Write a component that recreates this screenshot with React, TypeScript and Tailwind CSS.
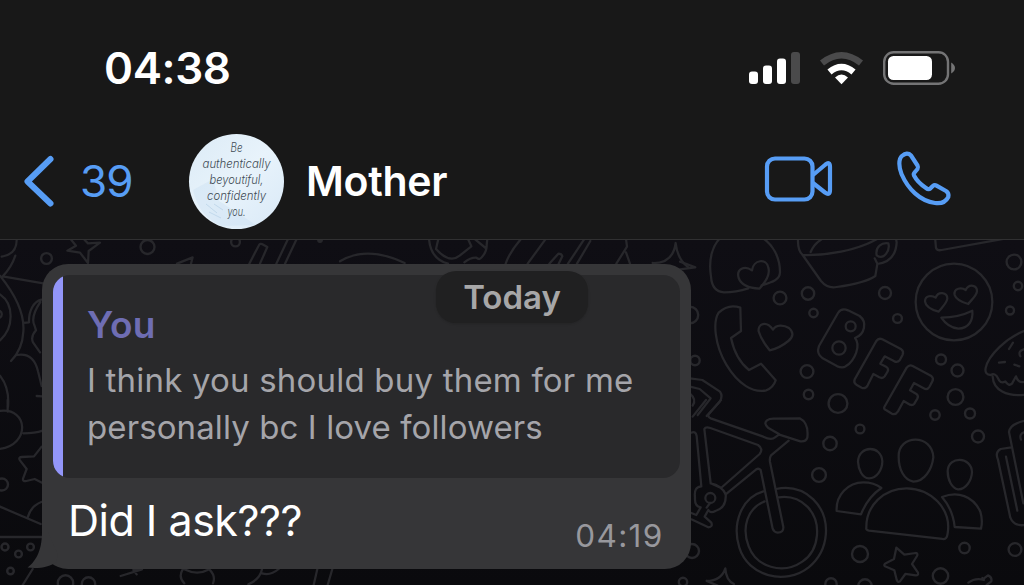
import type { ReactNode } from 'react';

const AVATAR_LINES = [
  { text: 'Be', y: 18, width: 12 },
  { text: 'authentically', y: 34, width: 68 },
  { text: 'beyoutiful,', y: 50, width: 54 },
  { text: 'confidently', y: 66, width: 59 },
  { text: 'you.', y: 82, width: 18 },
];

// x, y, radius
const BUBBLES: [number, number, number][] = [
  [780, 298, 6.7], [808, 293.5, 6.5], [813.5, 313, 4.5], [885, 293, 6.3], [897.5, 318.5, 4.7],
  [807, 371.5, 6.7], [808.5, 394.5, 5], [838, 403.5, 9.7], [941, 359.5, 5.3], [957.5, 370.5, 6.3],
  [955.5, 397, 8.2], [1014, 262, 7.7], [1018, 286, 4.5], [1010, 310.5, 4.3], [970, 413.5, 5.3],
  [935, 415, 5], [860, 429, 4.7], [830, 443.5, 7], [819, 475, 7.2], [978, 436.5, 6.3],
  [860, 554, 8.3], [964.5, 548, 5.5], [1015, 549.5, 6.7], [940.5, 576, 8], [692, 551, 7.3],
  [683, 582, 4.5], [831, 584, 6], [865, 586, 7], [690, 315, 8.5], [695, 360.5, 5],
  [46.5, 258.5, 5.7], [147.5, 247, 7.3], [235.5, 242, 4.7], [320, 240, 2],
  [2, 484.5, 6.3], [5, 547, 3.8], [18.5, 554, 3.7], [30.5, 547, 3.7], [10.5, 571, 3.6],
  [65.5, 583, 8], [88.5, 584, 7],
];

const Crop = ({ x, y, children }: { x: number; y: number; children: ReactNode }) => (
  <g transform={`translate(${x} ${y}) scale(.33333)`}>{children}</g>
);

const Wallpaper = () => (
  <svg
    viewBox="0 240 1024 345"
    className="col-start-1 row-start-1 h-[345px] w-[1024px]"
    fill="none"
    stroke="#27272b"
    strokeWidth="6.8"
    strokeLinecap="round"
    strokeLinejoin="round"
    aria-hidden="true"
  >
    <g strokeWidth="2.4">
      {BUBBLES.map(([cx, cy, r]) => (
        <circle key={`${cx}-${cy}`} cx={cx} cy={cy} r={r - 0.3} />
      ))}
    </g>
    <Crop x={680} y={235}>
      {/* speech bubble with heart */}
      <path d="M125 5C96 30 85 75 93 125Q96 170 132 172Q168 172 205 160M245 151C279 141 300 134 300 111C300 70 280 25 240 5" />
      <path d="M176 129C168 101 194 91 216 106C220 74 260 68 265 98C272 121 253 145 238 161C218 160 186 156 176 129Z" />
      {/* cup */}
      <path d="M355 0Q350 44 368 60L423 138Q442 161 470 156Q555 144 586 123L592 87Q647 80 650 22L646 0M368 60C438 62 530 48 595 10M392 51Q404 20 445 2" />
      <path d="M592 86L584 70M590 61C585 35 606 22 625 25C631 45 612 77 590 61Z" />
      <path d="M765 5L768 39Q772 48 785 45L980 10" />
      {/* heart eyes */}
      <circle cx="822" cy="201" r="115" />
      <path d="M735 199C735 181 756 180 767 188C774 168 802 171 802 191C799 207 784 219 776 230C758 225 737 218 735 199Z" />
      <path d="M824 180C820 158 845 157 857 165C868 144 892 151 891 169C889 184 872 196 865 207C848 202 828 195 824 180Z" />
      <path d="M784 248Q836 247 877 227C880 257 866 280 835 281Q804 278 784 248Z" />
      {/* telephone */}
      <path d="M181 218Q145 205 116 233C98 260 104 330 139 389C175 449 220 475 259 466Q280 457 287 436L243 386L207 405Q167 374 153 309L183 288Z" />
      <path d="M236 289C233 266 259 256 279 284C288 268 311 269 327 279C341 291 341 305 325 318Q300 339 269 346Q245 317 236 289Z" />
      {/* BFF letters */}
      <path d="M417 333L474 234Q484 218 504 226L539 243C561 260 556 298 525 309C543 330 526 376 497 394Q488 400 472 394L428 370Q408 356 417 333Z" />
      <circle cx="512" cy="274" r="15" /><circle cx="477" cy="339" r="20" />
      <path d="M524 433L589 318Q596 308 607 313L664 343Q672 349 668 359L659 376Q653 383 643 379L614 364L601 386L618 395Q628 402 622 411L614 424Q608 432 598 427L580 417L563 451Q556 463 545 458L529 449Q520 443 524 433Z" />
      <path d="M613 516L680 398Q688 388 698 393L754 423Q762 430 757 439L748 456Q742 466 731 460L702 444L690 466L708 476Q717 482 712 491L703 506Q698 512 690 509L671 498L654 529Q646 541 636 536L619 526Q610 522 613 516Z" />
      {/* donut */}
      <path d="M1035 287C980 308 925 360 917 399Q913 419 933 420Q940 414 950 423L958 437Q965 446 976 439Q986 455 996 446L1008 424Q1015 446 1035 440M938 425C940 465 980 486 1035 479M1035 342Q1012 347 1021 364M987 342L999 323M957 383L975 381M1003 389L1018 394" />
      <path d="M0 80L46 97L0 103M30 430L67 435L120 470Q130 484 119 500L80 543M30 455L59 462L92 490L53 540M30 476Q51 494 38 512" />
    </Crop>
    <Crop x={680} y={400}>
      {/* bicycle */}
      <path d="M38 50L78 0M123 0L86 43Q82 50 92 55L250 110Q274 122 285 112L298 103L264 83Q250 70 261 61Q268 56 280 56L359 55Q387 69 382 113Q378 126 361 124L298 104M326 122L273 166Q268 174 270 186L310 381Q311 398 293 398Q282 397 278 386L242 210Q235 202 225 211L137 283" />
      <path d="M73 87Q77 79 91 84L234 135Q251 147 239 162L123 264L92 250ZM34 98Q47 92 50 108L64 259M64 259Q41 260 45 292Q43 319 62 322L49 345L34 339M92 250Q125 256 137 283Q140 323 106 333Q92 341 85 330L74 350L94 368Q99 381 85 382L34 358M90 309L80 323" />
      <circle cx="91" cy="294" r="15" />
      <path d="M250 274C185 292 155 370 178 443C204 528 315 558 386 502C449 450 456 354 400 298C365 265 322 260 288 267M254 304C202 325 184 382 206 439C229 500 307 526 367 485C420 449 426 365 382 320Q347 285 296 292" />
      {/* people */}
      <path d="M534 185C536 135 604 134 607 184C607 208 591 235 567 235C546 234 535 208 534 185ZM656 170C654 102 758 101 760 172C756 208 733 245 700 245C671 239 656 207 656 170ZM803 213C806 167 874 169 876 216C875 242 857 269 834 268C816 265 803 241 803 213Z" />
      <path d="M559 383C558 316 612 265 680 265C752 266 815 325 803 400Q801 419 787 417L567 392Q557 390 559 383ZM543 343L470 333C467 286 504 247 550 247Q582 247 604 264Q563 292 543 343ZM786 291C833 273 879 287 901 335Q909 362 903 386L824 381Q819 329 786 291Z" />
      <path d="M649 443L673 464L707 459Q715 460 711 468L696 492L714 518Q716 526 707 526L676 522L660 544Q653 549 650 539L643 511L615 499Q609 494 619 489L642 477Z" />
      <path d="M80 543Q124 542 136 505Q138 541 162 552M80 543L113 557M865 548Q886 532 912 540L907 534M912 535L924 526Q937 531 934 544L920 555" />
      <path d="M1035 62Q990 72 987 96L1030 310M994 142L962 147Q944 157 954 179L991 353Q1002 380 1035 375M978 170L1012 332M1035 96Q1016 101 1023 119" />
    </Crop>
    <Crop x={0} y={235}>
      <path d="M50 15Q50 58 5 65M46 62Q34 98 8 124L130 145M0 122Q76 216 70 290C68 330 51 360 33 378M0 178C43 207 42 279 0 316M0 228A12 12 0 0 1 0 248M71 264L87 262C86 228 100 200 124 194M121 201Q90 247 104 273L108 286Q91 305 99 322L120 352M50 360Q101 351 114 409L125 453M110 483L127 484M0 422Q29 459 24 515" />
      <path d="M214 15L228 32L202 47L240 53L264 84L266 48L300 23L264 25L254 15M531 86L578 67L573 86M748 86L776 32Q780 23 790 29L802 36L780 86M829 86L864 12M855 86L890 12M955 12Q960 27 967 12" />
    </Crop>
    <Crop x={0} y={400}>
      <path d="M23 0V35M0 33C86 22 91 135 0 147M70 100Q105 100 128 92M125 140L102 169L65 171Q54 172 60 181L80 207L69 236Q68 246 79 243L104 237L126 248M0 320L122 372M84 350Q93 318 124 306M0 411H125M98 507L68 555M362 528L426 508L400 510L410 523M548 508Q534 532 553 550M553 508Q592 528 628 508Q648 528 639 550M745 553Q780 538 786 508M786 520Q811 528 836 507M952 507L941 555M997 507L983 555" />
    </Crop>
    <Crop x={340} y={235}>
      <path d="M0 79Q80 31 194 84M267 12Q272 72 324 86M295 12L288 42Q328 87 359 62L394 34L384 12M373 82Q392 67 409 68Q418 76 424 68Q441 50 440 30L442 12M404 12L437 39M497 86Q509 51 543 12M563 86L617 12M628 86L655 56Q665 56 667 64L656 86M684 86L733 12M711 86L751 18M858 12L861 35L829 86M858 52L870 86M938 84Q999 86 1007 24Q1012 73 1045 97" />
    </Crop>
  </svg>
);

const StatusBar = () => (
  <div className="flex h-[126px] items-start justify-between pt-[41px] pr-[69px] pl-[104px]">
    <span className="text-[44px] leading-[54px] font-semibold tracking-[-0.4px]">04:38</span>
    <div className="flex items-center pt-[9px]">
      <svg width="52" height="36" viewBox="0 0 52 36" fill="white">
        <rect x="0" y="21.5" width="9" height="12.5" rx="3" />
        <rect x="14" y="15.5" width="9" height="18.5" rx="3" />
        <rect x="28" y="8.5" width="9" height="25.5" rx="3" />
        <rect x="42" y="2" width="9" height="32" rx="3" fill="#4a4a4b" />
      </svg>
      <svg className="ml-[18px]" width="46" height="36" viewBox="819 50 46 36" fill="none" strokeWidth="6.5">
        <path d="M822 63Q841.5 47.5 861 63" stroke="#4a4a4b" />
        <path d="M829.5 72Q841.5 62 853.5 72" stroke="white" />
        <path d="M835 77.5Q841.5 71.5 848 77.5L841.5 84.3Z" fill="white" />
      </svg>
      <svg className="ml-[18px]" width="72" height="36" viewBox="883 50 72 36">
        <rect x="884.2" y="52.2" width="63.8" height="31.6" rx="9.5" fill="none" stroke="#747475" strokeWidth="2.4" />
        <rect x="888" y="56" width="44" height="24" rx="5.5" fill="white" />
        <path d="M951.2 62.5Q955 65 955 68Q955 71 951.2 73.5Z" fill="#747475" />
      </svg>
    </div>
  </div>
);

const Avatar = () => (
  <svg
    className="ml-[56px] h-[95px] w-[95px] rounded-full bg-linear-to-br from-[#dcebf6] via-[#e8f3fb] to-[#d9e9f7]"
    viewBox="0 0 95 95"
  >
    <path d="M17 70L28 79M20 78L32 84M25 70L34 76" stroke="#aac5df" strokeWidth="0.8" opacity="0.8" />
    <path d="M4 56L24 45L30 67L67 91L33 92Q10 83 4 56Z" fill="#c6ddf1" opacity="0.35" />
    {AVATAR_LINES.map((line) => (
      <text
        key={line.text}
        x="47.5"
        y={line.y}
        textAnchor="middle"
        textLength={line.width}
        lengthAdjust="spacingAndGlyphs"
        fontFamily="Inter, sans-serif"
        fontSize="12.5"
        fontStyle="italic"
        fontWeight="300"
        fill="#404b54"
      >
        {line.text}
      </text>
    ))}
  </svg>
);

const ChatHeader = () => (
  <div className="flex h-[113px] items-start pt-2 pl-[22px]">
    <div className="flex h-[95px] items-center text-[#579df5]">
      <svg className="-mt-px" width="34" height="54" viewBox="22 154 34 54" fill="none" stroke="currentColor" strokeWidth="6" strokeLinecap="round" strokeLinejoin="round">
        <path d="M50.5 159L27.5 181.5L50.5 203.5" />
      </svg>
      <span className="-mt-[2px] ml-6 w-[53px] text-[44px] tracking-[-1px]">39</span>
    </div>
    <Avatar />
    <span className="ml-[22px] flex h-[95px] w-[457px] items-center text-[41px] font-semibold tracking-[-0.3px]">
      Mother
    </span>
    <svg
      className="mt-[16px]"
      width="190"
      height="62"
      viewBox="763 150 190 62"
      fill="none"
      stroke="#579df5"
      strokeWidth="4.2"
      strokeLinejoin="round"
    >
      <rect x="767" y="158.5" width="45.5" height="41" rx="8" />
      <path d="M813 175L825.5 164.5Q830 161 830 167V190Q830 196 825 192.5L813 183" />
      <path d="M902.3 155.7C898 159 899 168 901.5 174C908 189 920 201 935 203C942 204 946 201.5 948.3 197C949 194 948 192.3 946 191L936.5 185.6Q934.5 184.5 932.8 186L930.5 188.3Q928.5 190 926 188C920 184 916.3 180 914 175.5Q913.2 173.7 915 172L917.5 169Q918.5 167.5 917.5 165.5L911 155.5C908.5 152.8 905 153.3 902.3 155.7Z" />
    </svg>
  </div>
);

const Message = () => (
  <div className="mt-[24px] ml-[42px] flex h-[304.5px] w-[648.5px] flex-col rounded-[26px] bg-[#363638] p-[11px]">
    <div className="flex h-[203px] shrink-0 overflow-hidden rounded-[17px] bg-[#29292b]">
      <div className="w-[10px] shrink-0 bg-[#9396f9]" />
      <div className="pt-[27px] pl-[24px] whitespace-nowrap">
        <p className="text-[37px] leading-[46px] font-semibold tracking-[0.2px] text-[#6e6db3]">You</p>
        <p className="mt-[9px] text-[33px] leading-[47px] tracking-[0.2px] text-[#a5a5aa]">
          I think you should buy them for me
          <br />
          <span className="tracking-[0.1px]">personally bc I love followers</span>
        </p>
      </div>
    </div>
    <div className="flex justify-between pr-[16px] pl-[15px] whitespace-nowrap">
      <p className="pt-[15px] text-[43px] leading-[54px] tracking-[-0.5px] text-white">Did I ask???</p>
      <time className="pt-[38px] text-[31.5px] leading-[40px] tracking-[1.3px] text-[#98989d]">04:19</time>
    </div>
  </div>
);

export default function App() {
  return (
    <main className="h-[585px] w-[1024px] overflow-hidden bg-[#181818] font-[Inter,sans-serif] text-white">
      <header className="h-[240px] border-b border-[#303031]">
        <StatusBar />
        <ChatHeader />
      </header>
      <section className="relative grid h-[345px] items-start justify-items-start bg-linear-to-b from-[#0f0e14] to-[#0a0a0d]">
        <Wallpaper />
        <div className="z-10 col-start-1 row-start-1">
          <Message />
        </div>
        <svg className="absolute top-[292px] left-[27px] z-10" width="40" height="38" viewBox="27 532 40 38" fill="#363638">
          <path d="M42 532C42 552 35 562 27.5 567.5C39 569 49 567 56 562.5L58 555L48 532Z" />
        </svg>
        <div className="absolute top-[31px] left-[436px] z-20 flex h-[52px] w-[152px] items-center justify-center rounded-[20px] bg-[#202021] pt-0.5 text-[33px] font-semibold text-[#a7a7a8] shadow-sm">
          Today
        </div>
      </section>
    </main>
  );
}
